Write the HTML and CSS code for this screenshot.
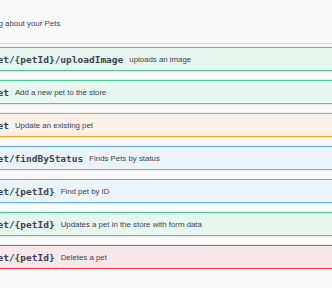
FILE: index.html
```html
<!DOCTYPE html>
<html lang="en">
<head>
  <meta charset="UTF-8">
  <meta name="viewport" content="width=device-width, initial-scale=1.0">
  <title>Swagger Petstore</title>
  <link rel="stylesheet" href="styles.css">
</head>
<body>
  <div class="tag-section">
    <!-- Tag header -->
    <h3 class="tag-header">
      <span class="tag-name">pet</span>
      <small class="tag-desc">Everything about your Pets</small>
    </h3>

    <!-- Operations -->
    <div class="op-list">
      <div class="opblock post">
        <span class="method">POST</span>
        <span class="path">/pet/{petId}/uploadImage</span>
        <span class="summary">uploads an image</span>
      </div>
      <div class="opblock post">
        <span class="method">POST</span>
        <span class="path">/pet</span>
        <span class="summary">Add a new pet to the store</span>
      </div>
      <div class="opblock put">
        <span class="method">PUT</span>
        <span class="path">/pet</span>
        <span class="summary">Update an existing pet</span>
      </div>
      <div class="opblock get">
        <span class="method">GET</span>
        <span class="path">/pet/findByStatus</span>
        <span class="summary">Finds Pets by status</span>
      </div>
      <div class="opblock get">
        <span class="method">GET</span>
        <span class="path">/pet/{petId}</span>
        <span class="summary">Find pet by ID</span>
      </div>
      <div class="opblock post">
        <span class="method">POST</span>
        <span class="path">/pet/{petId}</span>
        <span class="summary">Updates a pet in the store with form data</span>
      </div>
      <div class="opblock delete">
        <span class="method">DELETE</span>
        <span class="path">/pet/{petId}</span>
        <span class="summary">Deletes a pet</span>
      </div>
    </div>
  </div>
</body>
</html>
```

FILE: styles.css
```css
* {
  margin: 0;
  padding: 0;
  box-sizing: border-box;
}

body {
  background-color: #fafafa;
  color: #3b4151;
  font-family: "Liberation Sans", Arial, sans-serif;
  overflow: hidden;
}

.tag-section {
  width: 480px;
  margin-left: -70px;
}

.tag-header {
  display: flex;
  align-items: center;
  height: 44px;
  padding: 17px 0 12px 8px;
  border-bottom: 1px solid #d9dadd;
  font-weight: normal;
}

.tag-name {
  font-size: 14.4px;
  font-weight: bold;
  margin-right: 6px;
  line-height: 14px;
}

.tag-desc {
  font-size: 7.9px;
  line-height: 14px;
}

.op-list {
  display: flex;
  flex-direction: column;
  gap: 9px;
  padding-top: 3px;
}

.opblock {
  display: flex;
  align-items: center;
  height: 24px;
  padding: 3px;
  border: 1px solid;
  border-radius: 2.4px;
  box-shadow: 0 0 2px rgba(0, 0, 0, 0.19);
}

.method {
  width: 46px;
  height: 16px;
  line-height: 16px;
  text-align: center;
  font-size: 8.4px;
  font-weight: bold;
  color: #fff;
  border-radius: 2px;
}

.path {
  padding: 0 6px;
  font-family: "DejaVu Sans Mono", monospace;
  font-size: 9.5px;
  font-weight: bold;
  color: #3b4151;
}

.summary {
  font-size: 7.85px;
  color: #3b4151;
}

.opblock.post {
  border-color: #49cc90;
  background-color: #e8f6f0;
}

.opblock.post .method {
  background-color: #49cc90;
}

.opblock.put {
  border-color: #fca130;
  background-color: #fcf1e6;
}

.opblock.put .method {
  background-color: #fca130;
}

.opblock.get {
  border-color: #61affe;
  background-color: #ebf3fb;
}

.opblock.get .method {
  background-color: #61affe;
}

.opblock.delete {
  border-color: #f93e3e;
  background-color: #fae7e7;
}

.opblock.delete .method {
  background-color: #f93e3e;
}
```
